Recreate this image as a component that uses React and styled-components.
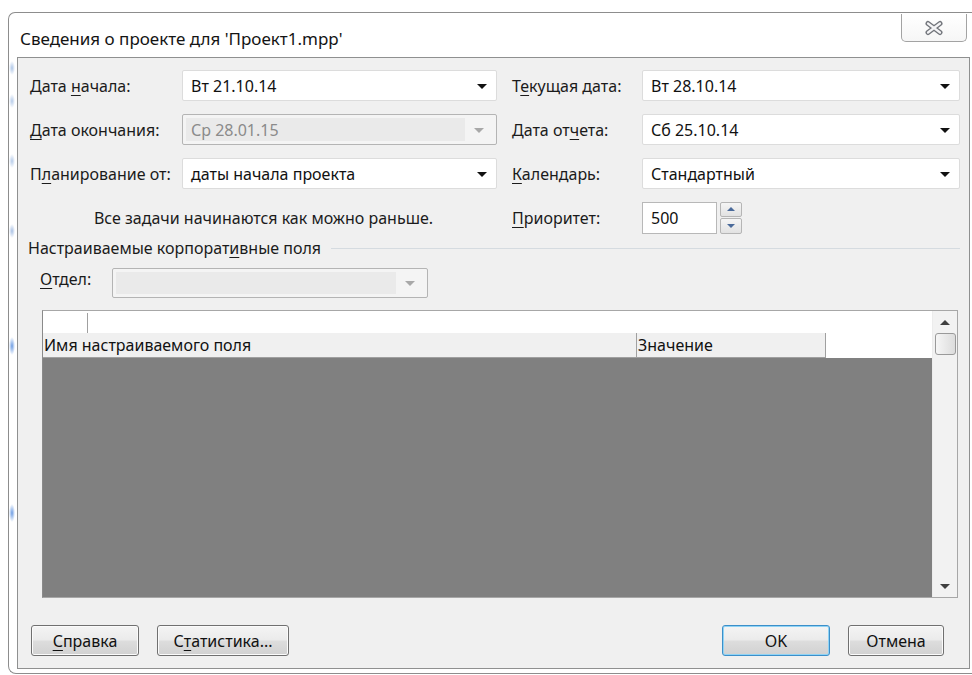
import React from 'react';
import styled, { createGlobalStyle } from 'styled-components';

const GlobalStyle = createGlobalStyle`
  html, body {
    margin: 0;
    padding: 0;
    background: #ffffff;
    overflow: hidden;
  }
  body {
    font-family: "Noto Sans", "Open Sans", sans-serif;
    font-size: 16px;
    color: #1b1b1b;
  }
`;

function App() {
  return (
    <>
      <GlobalStyle />
      <Window>
        <TitleBar>
          <Title>Сведения о проекте для 'Проект1.mpp'</Title>
          <CloseButton aria-label="Закрыть">
            <svg width="22" height="16" viewBox="0 0 22 16">
              <path d="M5 3.5 L17 12.5 M17 3.5 L5 12.5" stroke="#73767c" strokeWidth="5" strokeLinecap="round" />
              <path d="M5 3.5 L17 12.5 M17 3.5 L5 12.5" stroke="#f4f4f6" strokeWidth="2.2" strokeLinecap="round" />
            </svg>
          </CloseButton>
        </TitleBar>

        <Panel>
          <Form>
            <Label>Дата <Key>н</Key>ачала:</Label>
            <Combo>
              <ComboText>Вт 21.10.14</ComboText>
              <Arrow />
            </Combo>
            <span />
            <Label>Т<Key>е</Key>кущая дата:</Label>
            <Combo>
              <ComboText>Вт 28.10.14</ComboText>
              <Arrow />
            </Combo>

            <Label><Key>Д</Key>ата окончания:</Label>
            <Combo disabled>
              <ComboText disabled>Ср 28.01.15</ComboText>
              <Arrow disabled />
            </Combo>
            <span />
            <Label>Дата от<Key>ч</Key>ета:</Label>
            <Combo>
              <ComboText>Сб 25.10.14</ComboText>
              <Arrow />
            </Combo>

            <Label>П<Key>л</Key>анирование от:</Label>
            <Combo>
              <ComboText>даты начала проекта</ComboText>
              <Arrow />
            </Combo>
            <span />
            <Label><Key>К</Key>алендарь:</Label>
            <Combo>
              <ComboText>Стандартный</ComboText>
              <Arrow />
            </Combo>

            <Note>Все задачи начинаются как можно раньше.</Note>
            <span />
            <Label><Key>П</Key>риоритет:</Label>
            <Spinner>
              <SpinInput>500</SpinInput>
              <SpinButtons>
                <SpinButton><SpinGlyph up /></SpinButton>
                <SpinButton><SpinGlyph /></SpinButton>
              </SpinButtons>
            </Spinner>
          </Form>

          <GroupHeader>
            <span>Настраиваемые корпорат<Key>и</Key>вные поля</span>
            <GroupLine />
          </GroupHeader>

          <DeptRow>
            <DeptLabel><Key>О</Key>тдел:</DeptLabel>
            <Combo disabled width={316} height={30}>
              <ComboText disabled />
              <Arrow disabled />
            </Combo>
          </DeptRow>

          <FieldGrid>
            <GridMain>
              <EditRow>
                <EditCorner />
              </EditRow>
              <HeaderRow>
                <HeaderCell width={594}>Имя настраиваемого поля</HeaderCell>
                <HeaderCell width={189}>Значение</HeaderCell>
              </HeaderRow>
              <GridBody />
            </GridMain>
            <ScrollBar>
              <ScrollArrow up />
              <ScrollThumb />
              <ScrollTrack />
              <ScrollArrow />
            </ScrollBar>
          </FieldGrid>

          <ButtonRow>
            <Group>
              <Button width={108}><Key>С</Key>правка</Button>
              <Button width={132}>С<Key>т</Key>атистика...</Button>
            </Group>
            <Group>
              <Button width={108} primary>OK</Button>
              <Button width={96}>Отмена</Button>
            </Group>
          </ButtonRow>
        </Panel>
      </Window>
    </>
  );
}

const Window = styled.div`
  margin: 12px 0 0 8px;
  width: 966px;
  height: 662px;
  box-sizing: border-box;
  border: 1px solid #8d8d8d;
  border-right: none;
  border-radius: 7px 0 0 8px;
  padding: 0 4px 4px 8px;
  display: flex;
  flex-direction: column;
  /* glass highlights along the left frame */
  background:
    radial-gradient(3px 7px at 3px 55px, rgba(120, 160, 215, 0.6), transparent),
    radial-gradient(3px 7px at 3px 88px, rgba(120, 160, 215, 0.55), transparent),
    radial-gradient(3px 7px at 3px 148px, rgba(120, 160, 215, 0.55), transparent),
    radial-gradient(3px 7px at 3px 218px, rgba(110, 150, 210, 0.6), transparent),
    radial-gradient(3px 9px at 3px 333px, rgba(70, 130, 220, 0.8), transparent),
    radial-gradient(3px 9px at 3px 500px, rgba(70, 130, 220, 0.8), transparent),
    #ffffff;
`;

const TitleBar = styled.div`
  height: 44px;
  display: flex;
  justify-content: space-between;
  align-items: flex-start;
`;

const Title = styled.div`
  margin: 14px 0 0 3px;
  font-size: 17px;
  color: #141414;
  white-space: nowrap;
`;

const CloseButton = styled.div`
  width: 66px;
  height: 28px;
  margin: 1px 3px 0 0;
  box-sizing: border-box;
  border: 1px solid #a3a3a3;
  border-top: none;
  border-radius: 0 0 5px 5px;
  background: linear-gradient(#ffffff, #f6f6f6);
  display: flex;
  align-items: center;
  justify-content: center;
`;

const Panel = styled.div`
  flex: 1;
  background: #f0f0f0;
  border: 1px solid #8f9090;
  padding: 12px 8px 12px 12px;
  display: flex;
  flex-direction: column;
`;

const Form = styled.div`
  display: grid;
  grid-template-columns: 152px 315px 15px 130px 318px;
  grid-auto-rows: 31px;
  row-gap: 13px;
  align-items: center;
`;

const Label = styled.div`
  white-space: nowrap;
  color: #1b1b1b;
`;

const Key = styled.span`
  text-decoration: underline;
  text-underline-offset: 3px;
  text-decoration-thickness: 1px;
`;

const Combo = styled.div`
  width: ${p => (p.width ? `${p.width}px` : 'auto')};
  height: ${p => (p.height ? `${p.height}px` : '31px')};
  box-sizing: border-box;
  border: 1px solid ${p => (p.disabled ? '#b4b4b4' : '#dcdcdc')};
  border-radius: 2px;
  background: ${p => (p.disabled ? '#f4f4f4' : '#ffffff')};
  padding: ${p => (p.disabled ? '3px' : '0')};
  display: flex;
  align-items: stretch;
`;

const ComboText = styled.div`
  flex: 1;
  display: flex;
  align-items: center;
  padding-left: ${p => (p.disabled ? '5px' : '8px')};
  background: ${p => (p.disabled ? '#eaeaea' : 'transparent')};
  color: ${p => (p.disabled ? '#8b8b8b' : '#111111')};
  white-space: nowrap;
`;

const Arrow = styled.div`
  width: 28px;
  display: flex;
  align-items: center;
  justify-content: center;

  &::after {
    content: '';
    border-left: 5px solid transparent;
    border-right: 5px solid transparent;
    border-top: 5px solid ${p => (p.disabled ? '#a8a8a8' : '#111111')};
    margin-top: 1px;
  }
`;

const Note = styled.div`
  grid-column: 1 / span 2;
  text-align: center;
  white-space: nowrap;
`;

const Spinner = styled.div`
  display: flex;
  align-items: center;
  height: 32px;
`;

const SpinInput = styled.div`
  width: 75px;
  height: 32px;
  box-sizing: border-box;
  border: 1px solid #b8b8b8;
  background: #ffffff;
  padding-left: 8px;
  display: flex;
  align-items: center;
  color: #111111;
`;

const SpinButtons = styled.div`
  margin-left: 3px;
  width: 22px;
  height: 32px;
  display: flex;
  flex-direction: column;
  gap: 1px;
`;

const SpinButton = styled.div`
  flex: 1;
  box-sizing: border-box;
  border: 1px solid #b5b5b5;
  border-radius: 2px;
  background: linear-gradient(#f5f5f5, #e2e2e2);
  display: flex;
  align-items: center;
  justify-content: center;
`;

const SpinGlyph = styled.div`
  border-left: 4px solid transparent;
  border-right: 4px solid transparent;
  ${p => (p.up ? 'border-bottom: 4px solid #4a6a9a;' : 'border-top: 4px solid #4a6a9a;')}
`;

const GroupHeader = styled.div`
  margin: 4px 0 0 -2px;
  height: 22px;
  display: flex;
  align-items: center;
  white-space: nowrap;
`;

const GroupLine = styled.div`
  flex: 1;
  height: 1px;
  margin: 1px 1px 0 10px;
  background: #d5dbe0;
`;

const DeptRow = styled.div`
  margin-top: 9px;
  display: flex;
  align-items: flex-start;
`;

const DeptLabel = styled.div`
  width: 72px;
  padding: 0 0 0 10px;
`;

const FieldGrid = styled.div`
  margin: 12px 3px 0 12px;
  height: 288px;
  box-sizing: border-box;
  border: 1px solid #a7a7a7;
  border-left-color: #8a8a8a;
  display: flex;
`;

const GridMain = styled.div`
  flex: 1;
  display: flex;
  flex-direction: column;
  background: #ffffff;
`;

const EditRow = styled.div`
  height: 22px;
  display: flex;
  background: #ffffff;
`;

const EditCorner = styled.div`
  width: 44px;
  margin-top: 2px;
  border-right: 1px solid #a0a0a0;
`;

const HeaderRow = styled.div`
  height: 25px;
  display: flex;
  background: #ffffff;
`;

const HeaderCell = styled.div`
  width: ${p => p.width}px;
  box-sizing: border-box;
  background: #f0f0f0;
  border-right: 1px solid #a0a0a0;
  border-bottom: 1px solid #a0a0a0;
  padding: 1px 0 0 1px;
  color: #111111;
  white-space: nowrap;
`;

const GridBody = styled.div`
  flex: 1;
  background: #808080;
`;

const ScrollBar = styled.div`
  width: 24px;
  background: #f2f2f2;
  border-left: 1px solid #ececec;
  display: flex;
  flex-direction: column;
  align-items: center;
`;

const ScrollArrow = styled.div`
  height: 22px;
  width: 100%;
  display: flex;
  align-items: center;
  justify-content: center;

  &::after {
    content: '';
    border-left: 5px solid transparent;
    border-right: 5px solid transparent;
    ${p => (p.up ? 'border-bottom: 5px solid #404040;' : 'border-top: 5px solid #404040;')}
  }
`;

const ScrollThumb = styled.div`
  width: 21px;
  height: 22px;
  box-sizing: border-box;
  border: 1px solid #9a9a9a;
  border-radius: 3px;
  background: linear-gradient(90deg, #f6f6f6, #dcdcdc);
`;

const ScrollTrack = styled.div`
  flex: 1;
`;

const ButtonRow = styled.div`
  margin: auto 17px 0 1px;
  display: flex;
  justify-content: space-between;
`;

const Group = styled.div`
  display: flex;
  gap: 18px;
`;

const Button = styled.div`
  width: ${p => p.width}px;
  height: 31px;
  box-sizing: border-box;
  border: 1px solid ${p => (p.primary ? '#3c8fc9' : '#707070')};
  border-radius: 3px;
  background: linear-gradient(#f4f4f4 0%, #ebebeb 48%, #dddddd 52%, #d1d1d1 100%);
  box-shadow: inset 0 0 0 1px ${p => (p.primary ? '#8fd3f5' : '#fbfbfb')};
  display: flex;
  align-items: center;
  justify-content: center;
  color: #111111;
  white-space: nowrap;
`;

export default App;
